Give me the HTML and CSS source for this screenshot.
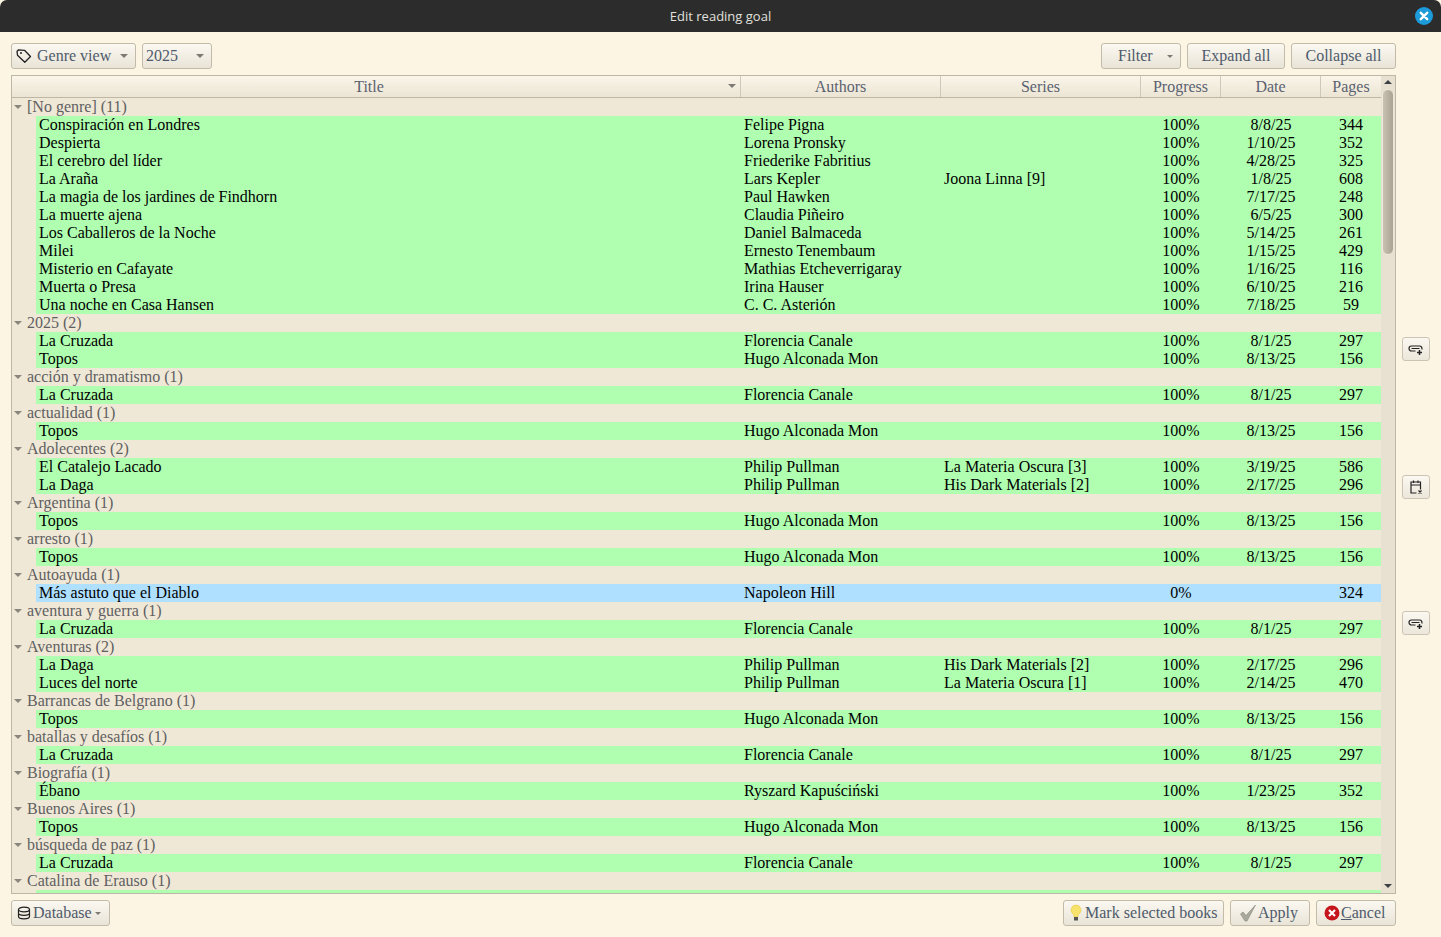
FILE: index.html
```html
<!DOCTYPE html>
<html lang="en">
<head>
<meta charset="utf-8">
<title>Edit reading goal</title>
<link rel="stylesheet" href="styles.css">
</head>
<body>
<div class="window">
  <header class="titlebar">
    <span class="titlebar-text">Edit reading goal</span>
    <span class="close"><svg width="18" height="18" viewBox="0 0 18 18"><circle cx="9" cy="9" r="9" fill="#1d9ad9"/><path d="M5.800 5.800l6.400 6.400M12.200 5.800l-6.400 6.400" stroke="#fff" stroke-width="2.400" stroke-linecap="round"/></svg></span>
  </header>
  <div class="toolbar">
    <button class="btn btn-genre"><svg class="ico" width="16" height="16" viewBox="0 0 16 16"><path d="M1 3.500l1.500-1.700 6 .5 6 6.200-5.700 5.700-7.300-7z" fill="none" stroke="#222" stroke-width="1.300" stroke-linejoin="round"/><circle cx="5" cy="5" r="1" fill="#222"/></svg><span class="lbl">Genre view</span><i class="caret caret-genre"></i></button>
    <button class="btn btn-year"><span class="lbl">2025</span><i class="caret"></i></button>
    <span class="spacer"></span>
    <button class="btn btn-filter"><span class="lbl">Filter</span><i class="caret caret-small"></i></button>
    <button class="btn btn-expand">Expand all</button>
    <button class="btn btn-collapse">Collapse all</button>
  </div>
  <div class="middle">
    <div class="tree">
      <div class="list">
        <div class="thead">
          <div class="th th-title"><span class="th-label">Title</span><i class="caret sort"></i></div>
          <div class="th w-auth">Authors</div>
          <div class="th w-ser">Series</div>
          <div class="th w-prog">Progress</div>
          <div class="th w-date">Date</div>
          <div class="th w-pages last">Pages</div>
        </div>
        <div class="rows">
<div class="group"><i class="tw"></i>[No genre] (11)</div>
<div class="book"><span class="t">Conspiración en Londres</span><span class="a">Felipe Pigna</span><span class="s"></span><span class="p">100%</span><span class="d">8/8/25</span><span class="n">344</span></div>
<div class="book"><span class="t">Despierta</span><span class="a">Lorena Pronsky</span><span class="s"></span><span class="p">100%</span><span class="d">1/10/25</span><span class="n">352</span></div>
<div class="book"><span class="t">El cerebro del líder</span><span class="a">Friederike Fabritius</span><span class="s"></span><span class="p">100%</span><span class="d">4/28/25</span><span class="n">325</span></div>
<div class="book"><span class="t">La Araña</span><span class="a">Lars Kepler</span><span class="s">Joona Linna [9]</span><span class="p">100%</span><span class="d">1/8/25</span><span class="n">608</span></div>
<div class="book"><span class="t">La magia de los jardines de Findhorn</span><span class="a">Paul Hawken</span><span class="s"></span><span class="p">100%</span><span class="d">7/17/25</span><span class="n">248</span></div>
<div class="book"><span class="t">La muerte ajena</span><span class="a">Claudia Piñeiro</span><span class="s"></span><span class="p">100%</span><span class="d">6/5/25</span><span class="n">300</span></div>
<div class="book"><span class="t">Los Caballeros de la Noche</span><span class="a">Daniel Balmaceda</span><span class="s"></span><span class="p">100%</span><span class="d">5/14/25</span><span class="n">261</span></div>
<div class="book"><span class="t">Milei</span><span class="a">Ernesto Tenembaum</span><span class="s"></span><span class="p">100%</span><span class="d">1/15/25</span><span class="n">429</span></div>
<div class="book"><span class="t">Misterio en Cafayate</span><span class="a">Mathias Etcheverrigaray</span><span class="s"></span><span class="p">100%</span><span class="d">1/16/25</span><span class="n">116</span></div>
<div class="book"><span class="t">Muerta o Presa</span><span class="a">Irina Hauser</span><span class="s"></span><span class="p">100%</span><span class="d">6/10/25</span><span class="n">216</span></div>
<div class="book"><span class="t">Una noche en Casa Hansen</span><span class="a">C. C. Asterión</span><span class="s"></span><span class="p">100%</span><span class="d">7/18/25</span><span class="n">59</span></div>
<div class="group"><i class="tw"></i>2025 (2)</div>
<div class="book"><span class="t">La Cruzada</span><span class="a">Florencia Canale</span><span class="s"></span><span class="p">100%</span><span class="d">8/1/25</span><span class="n">297</span></div>
<div class="book"><span class="t">Topos</span><span class="a">Hugo Alconada Mon</span><span class="s"></span><span class="p">100%</span><span class="d">8/13/25</span><span class="n">156</span></div>
<div class="group"><i class="tw"></i>acción y dramatismo (1)</div>
<div class="book"><span class="t">La Cruzada</span><span class="a">Florencia Canale</span><span class="s"></span><span class="p">100%</span><span class="d">8/1/25</span><span class="n">297</span></div>
<div class="group"><i class="tw"></i>actualidad (1)</div>
<div class="book"><span class="t">Topos</span><span class="a">Hugo Alconada Mon</span><span class="s"></span><span class="p">100%</span><span class="d">8/13/25</span><span class="n">156</span></div>
<div class="group"><i class="tw"></i>Adolecentes (2)</div>
<div class="book"><span class="t">El Catalejo Lacado</span><span class="a">Philip Pullman</span><span class="s">La Materia Oscura [3]</span><span class="p">100%</span><span class="d">3/19/25</span><span class="n">586</span></div>
<div class="book"><span class="t">La Daga</span><span class="a">Philip Pullman</span><span class="s">His Dark Materials [2]</span><span class="p">100%</span><span class="d">2/17/25</span><span class="n">296</span></div>
<div class="group"><i class="tw"></i>Argentina (1)</div>
<div class="book"><span class="t">Topos</span><span class="a">Hugo Alconada Mon</span><span class="s"></span><span class="p">100%</span><span class="d">8/13/25</span><span class="n">156</span></div>
<div class="group"><i class="tw"></i>arresto (1)</div>
<div class="book"><span class="t">Topos</span><span class="a">Hugo Alconada Mon</span><span class="s"></span><span class="p">100%</span><span class="d">8/13/25</span><span class="n">156</span></div>
<div class="group"><i class="tw"></i>Autoayuda (1)</div>
<div class="book unread"><span class="t">Más astuto que el Diablo</span><span class="a">Napoleon Hill</span><span class="s"></span><span class="p">0%</span><span class="d"></span><span class="n">324</span></div>
<div class="group"><i class="tw"></i>aventura y guerra (1)</div>
<div class="book"><span class="t">La Cruzada</span><span class="a">Florencia Canale</span><span class="s"></span><span class="p">100%</span><span class="d">8/1/25</span><span class="n">297</span></div>
<div class="group"><i class="tw"></i>Aventuras (2)</div>
<div class="book"><span class="t">La Daga</span><span class="a">Philip Pullman</span><span class="s">His Dark Materials [2]</span><span class="p">100%</span><span class="d">2/17/25</span><span class="n">296</span></div>
<div class="book"><span class="t">Luces del norte</span><span class="a">Philip Pullman</span><span class="s">La Materia Oscura [1]</span><span class="p">100%</span><span class="d">2/14/25</span><span class="n">470</span></div>
<div class="group"><i class="tw"></i>Barrancas de Belgrano (1)</div>
<div class="book"><span class="t">Topos</span><span class="a">Hugo Alconada Mon</span><span class="s"></span><span class="p">100%</span><span class="d">8/13/25</span><span class="n">156</span></div>
<div class="group"><i class="tw"></i>batallas y desafíos (1)</div>
<div class="book"><span class="t">La Cruzada</span><span class="a">Florencia Canale</span><span class="s"></span><span class="p">100%</span><span class="d">8/1/25</span><span class="n">297</span></div>
<div class="group"><i class="tw"></i>Biografía (1)</div>
<div class="book"><span class="t">Ébano</span><span class="a">Ryszard Kapuściński</span><span class="s"></span><span class="p">100%</span><span class="d">1/23/25</span><span class="n">352</span></div>
<div class="group"><i class="tw"></i>Buenos Aires (1)</div>
<div class="book"><span class="t">Topos</span><span class="a">Hugo Alconada Mon</span><span class="s"></span><span class="p">100%</span><span class="d">8/13/25</span><span class="n">156</span></div>
<div class="group"><i class="tw"></i>búsqueda de paz (1)</div>
<div class="book"><span class="t">La Cruzada</span><span class="a">Florencia Canale</span><span class="s"></span><span class="p">100%</span><span class="d">8/1/25</span><span class="n">297</span></div>
<div class="group"><i class="tw"></i>Catalina de Erauso (1)</div>
<div class="book"><span class="t"></span><span class="a"></span><span class="s"></span><span class="p"></span><span class="d"></span><span class="n"></span></div>
        </div>
      </div>
      <div class="scrollbar">
        <i class="arrow-up"></i>
        <div class="thumb"></div>
        <span class="spacer"></span>
        <i class="arrow-down"></i>
      </div>
    </div>
    <aside class="side">
      <button class="side-btn"><svg width="16" height="14" viewBox="0 0 16 14"><path d="M7.500 9H3.500a2.500 2.500 0 0 1 0-5h8a2.500 2.500 0 0 1 2.300 3.500M3.500 6.500h8" fill="none" stroke="#222" stroke-width="1.200"/><path d="M11.500 8v5M9 10.500h5" stroke="#222" stroke-width="1.500"/></svg></button>
      <button class="side-btn side-cal"><svg width="16" height="16" viewBox="0 0 16 16"><path d="M8.500 14H3V3h9.500v7.500M3 6h9.500M5.500 1.500V4M10 1.500V4" fill="none" stroke="#222" stroke-width="1.200"/><path d="M10.500 11.500l3 3M13.500 11.500l-3 3" stroke="#222" stroke-width="1.200"/></svg></button>
      <button class="side-btn side-link"><svg width="16" height="14" viewBox="0 0 16 14"><path d="M7.500 9H3.500a2.500 2.500 0 0 1 0-5h8a2.500 2.500 0 0 1 2.300 3.500M3.500 6.500h8" fill="none" stroke="#222" stroke-width="1.200"/><path d="M11.500 8v5M9 10.500h5" stroke="#222" stroke-width="1.500"/></svg></button>
    </aside>
  </div>
  <div class="bottombar">
    <button class="btn btn-db"><svg class="ico-db" width="14" height="14" viewBox="0 0 14 14"><ellipse cx="7" cy="3.500" rx="5.500" ry="2.300" fill="none" stroke="#222" stroke-width="1.200"/><path d="M1.500 3.500v7c0 1.300 2.500 2.300 5.500 2.300s5.500-1 5.500-2.300v-7M1.500 7c0 1.300 2.500 2.300 5.500 2.300s5.500-1 5.500-2.300" fill="none" stroke="#222" stroke-width="1.200"/></svg><span>Database</span><i class="caret caret-tiny"></i></button>
    <span class="spacer"></span>
    <button class="btn btn-mark"><svg width="14" height="18" viewBox="0 0 14 18"><path d="M7 1a5 5 0 0 0-3 9c.800.700 1 1.500 1 3h4c0-1.500.200-2.300 1-3a5 5 0 0 0-3-9z" fill="#f7e36b" stroke="#e5c94a" stroke-width=".6"/><rect x="5" y="13" width="4" height="3.500" fill="#555"/></svg><span>Mark selected books</span></button>
    <button class="btn btn-apply"><svg width="17" height="18" viewBox="0 0 17 18"><path d="M0.500 10l2.500-2 3 3.500L15.500 1 7 17H5z" fill="#a8a89c" stroke="#8f8f84" stroke-width=".7"/></svg><span>Apply</span></button>
    <button class="btn btn-cancel"><svg width="16" height="16" viewBox="0 0 16 16"><circle cx="8" cy="8" r="7.500" fill="#c5161d"/><path d="M5 5l6 6M11 5l-6 6" stroke="#fff" stroke-width="2.200"/></svg><span><u>C</u>ancel</span></button>
  </div>
</div>
</body>
</html>
```
FILE: styles.css
```css
* { box-sizing: border-box; }
html, body { margin: 0; height: 100%; }
body { background: #2c2c2c; font-family: "Liberation Serif", serif; font-size: 16px; overflow: hidden; }
.window { width: 1441px; height: 937px; display: flex; flex-direction: column; background: #fdf5e4; }
.titlebar { height: 32px; flex: none; background: #2c2c2c; border-radius: 7px 7px 0 0; display: flex; align-items: center; justify-content: center; position: relative; }
.titlebar-text { color: #e0e0dc; font-family: "Open Sans", "Noto Sans", sans-serif; font-size: 13px; }
.close { position: absolute; right: 8px; top: 7px; width: 18px; height: 18px; display: block; line-height: 0; }
.toolbar { height: 26px; margin: 11px 45px 6px 11px; flex: none; display: flex; gap: 6px; }
.spacer { flex: 1; }
.btn { height: 26px; padding: 0; border: 1px solid #c3bbaa; border-radius: 3px; background: linear-gradient(#fbf8f1, #e9e4d7); color: #4e5a6b; font-family: "Liberation Serif", serif; font-size: 16px; display: flex; align-items: center; justify-content: center; }
.lbl { display: block; }
.caret { display: block; width: 0; height: 0; border-left: 4px solid transparent; border-right: 4px solid transparent; border-top: 4px solid #7d7a74; }
.btn-genre { width: 125px; justify-content: flex-start; padding-left: 4px; }
.ico { margin-right: 5px; }
.caret-genre { margin-left: 9px; }
.btn-year { width: 70px; justify-content: flex-start; padding-left: 3px; }
.btn-year .caret { margin-left: 18px; }
.btn-filter { width: 80px; justify-content: flex-start; padding-left: 16px; }
.caret-small { margin-left: 14px; border-width: 3px 3px 0; border-top-color: #7d7a74; }
.btn-expand { width: 98px; }
.btn-collapse { width: 105px; }
.middle { flex: none; display: flex; height: 819px; }
.tree { margin-left: 11px; width: 1385px; height: 819px; border: 1px solid #bfb7a6; display: flex; background: #efe8d6; overflow: hidden; }
.list { width: 1369px; flex: none; display: flex; flex-direction: column; overflow: hidden; }
.thead { height: 22px; flex: none; display: flex; background: linear-gradient(#faf5e9, #ece5d4); border-bottom: 1px solid #bfb7a6; }
.th { height: 21px; color: #5b6270; line-height: 21px; text-align: center; border-right: 1px solid #cfc8b8; }
.th-title { width: 729px; display: flex; align-items: center; padding-right: 4px; }
.th-label { flex: 1; text-align: center; padding-right: 2px; }
.sort { margin-top: -2px; }
.th.last { border-right: 0; }
.w-auth, .w-ser { width: 200px; }
.w-prog { width: 80px; }
.w-date { width: 100px; }
.w-pages { width: 60px; }
.rows { flex: 1; overflow: hidden; }
.group { height: 18px; line-height: 18px; padding-left: 15px; color: #5f5f62; position: relative; white-space: nowrap; }
.tw { position: absolute; left: 2px; top: 7px; width: 0; height: 0; border-left: 4px solid transparent; border-right: 4px solid transparent; border-top: 4px solid #8a867d; }
.book { height: 18px; line-height: 18px; margin-left: 24px; background: #b0ffb0; display: flex; color: #000; white-space: nowrap; }
.book.unread { background: #b0e0ff; }
.t { width: 705px; padding-left: 3px; }
.a, .s { width: 200px; padding-left: 3px; }
.p { width: 80px; text-align: center; }
.d { width: 100px; text-align: center; }
.n { width: 60px; text-align: center; }
.scrollbar { width: 14px; flex: none; background: #e8e1d1; display: flex; flex-direction: column; align-items: center; }
.arrow-up { flex: none; margin-top: 4px; width: 0; height: 0; border-left: 4px solid transparent; border-right: 4px solid transparent; border-bottom: 4px solid #3d4247; }
.arrow-down { flex: none; margin-bottom: 5px; width: 0; height: 0; border-left: 4px solid transparent; border-right: 4px solid transparent; border-top: 4px solid #3d4247; }
.thumb { margin-top: 5px; width: 12px; height: 166px; flex: none; border-radius: 6px; border: 1px solid #efe9db; background: linear-gradient(90deg, #c9c1b1, #aaa293); }
.side { width: 45px; flex: none; display: flex; flex-direction: column; align-items: flex-start; padding: 262px 0 0 6px; }
.side-btn { width: 28px; height: 24px; padding: 0; border: 1px solid #cbc4b4; border-radius: 3px; background: linear-gradient(#fbf8f1, #ece7da); display: flex; align-items: center; justify-content: center; }
.side-cal { margin-top: 114px; }
.side-link { margin-top: 112px; }
.bottombar { height: 26px; margin: 6px 45px 0 11px; flex: none; display: flex; gap: 6px; }
.btn-db { width: 99px; justify-content: flex-start; padding-left: 5px; }
.ico-db { margin-right: 2px; }
.caret-tiny { margin-left: 3px; border-width: 3px 3px 0; }
.btn-mark { width: 161px; justify-content: flex-start; padding-left: 5px; }
.btn-mark svg { margin-right: 2px; }
.btn-apply { width: 80px; justify-content: flex-start; padding-left: 9px; }
.btn-apply svg { margin-right: 1px; }
.btn-cancel { width: 80px; justify-content: flex-start; padding-left: 7px; }
.btn-cancel svg { margin-right: 1px; }
```
